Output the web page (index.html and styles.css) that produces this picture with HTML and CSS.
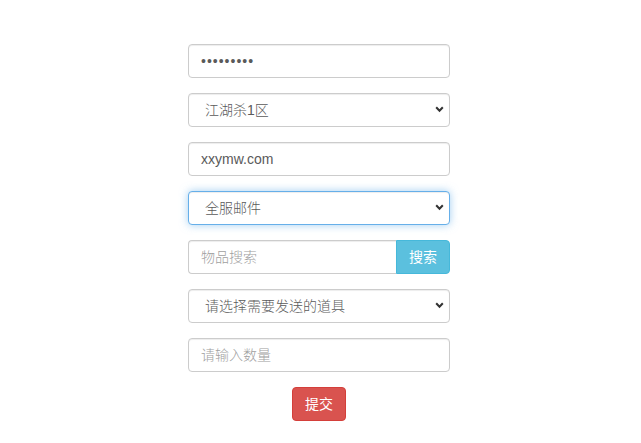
FILE: index.html
```html
<!DOCTYPE html>
<html lang="zh">
<head>
<meta charset="utf-8">
<link rel="stylesheet" href="styles.css">
</head>
<body>
<div class="page">
  <form class="form">
    <input class="form-control password" type="password" value="123456789">
    <div class="select-wrap">
      <select class="form-control select"><option>江湖杀1区</option></select>
      <svg class="chev" width="9" height="7" viewBox="0 0 9 7"><path d="M1.2 1.3 L4.5 4.8 L7.8 1.3" fill="none" stroke="#333" stroke-width="2"/></svg>
    </div>
    <input class="form-control" type="text" value="xxymw.com">
    <div class="select-wrap">
      <select class="form-control select focused"><option>全服邮件</option></select>
      <svg class="chev" width="9" height="7" viewBox="0 0 9 7"><path d="M1.2 1.3 L4.5 4.8 L7.8 1.3" fill="none" stroke="#333" stroke-width="2"/></svg>
    </div>
    <div class="input-group">
      <input class="form-control group-input" type="text" placeholder="物品搜索">
      <button class="btn btn-info" type="button">搜索</button>
    </div>
    <div class="select-wrap">
      <select class="form-control select"><option>请选择需要发送的道具</option></select>
      <svg class="chev" width="9" height="7" viewBox="0 0 9 7"><path d="M1.2 1.3 L4.5 4.8 L7.8 1.3" fill="none" stroke="#333" stroke-width="2"/></svg>
    </div>
    <input class="form-control" type="text" placeholder="请输入数量">
    <div class="actions">
      <button class="btn btn-danger" type="button">提交</button>
    </div>
  </form>
</div>
</body>
</html>
```

FILE: styles.css
```css
* { box-sizing: border-box; }
html, body { margin: 0; padding: 0; background: #fff; }
body {
  font-family: "Liberation Sans", "Noto Sans CJK SC", sans-serif;
  font-size: 14px;
  color: #555;
}
.page {
  display: flex;
  justify-content: center;
  padding: 44px 3px 0 0;
}
.form {
  width: 262px;
  display: flex;
  flex-direction: column;
  gap: 15px;
}
.form-control {
  display: block;
  width: 100%;
  height: 34px;
  padding: 6px 12px;
  font-family: "Liberation Sans", "Noto Sans CJK SC", sans-serif;
  font-size: 14px;
  font-weight: 300;
  line-height: 20px;
  color: #5a5a5a;
  background: #fff;
  border: 1px solid #ccc;
  border-radius: 4px;
  box-shadow: inset 0 1px 1px rgba(0,0,0,.075);
  outline: none;
  margin: 0;
}
.password { letter-spacing: 1px; }
.form-control::placeholder { color: #a0a0a0; }
.select-wrap { position: relative; }
.select {
  appearance: none;
  -webkit-appearance: none;
  padding-left: 16px;
}
.focused {
  border-color: #66afe9;
  box-shadow: inset 0 1px 1px rgba(0,0,0,.075), 0 0 8px rgba(102,175,233,.6);
}
.chev {
  position: absolute;
  right: 6px;
  top: 13px;
  pointer-events: none;
}
.input-group { display: flex; }
.group-input {
  flex: 1;
  border-radius: 4px 0 0 4px;
  border-right: 0;
}
.btn {
  height: 34px;
  padding: 6px 12px;
  font-family: "Liberation Sans", "Noto Sans CJK SC", sans-serif;
  font-size: 14px;
  line-height: 20px;
  color: #fff;
  border: 1px solid transparent;
  border-radius: 4px;
  cursor: pointer;
  margin: 0;
}
.btn-info {
  background: #5bc0de;
  border-color: #46b8da;
  border-radius: 0 4px 4px 0;
  width: 54px;
}
.btn-danger {
  background: #d9534f;
  border-color: #d43f3a;
  width: 54px;
}
.actions { display: flex; justify-content: center; }
```
